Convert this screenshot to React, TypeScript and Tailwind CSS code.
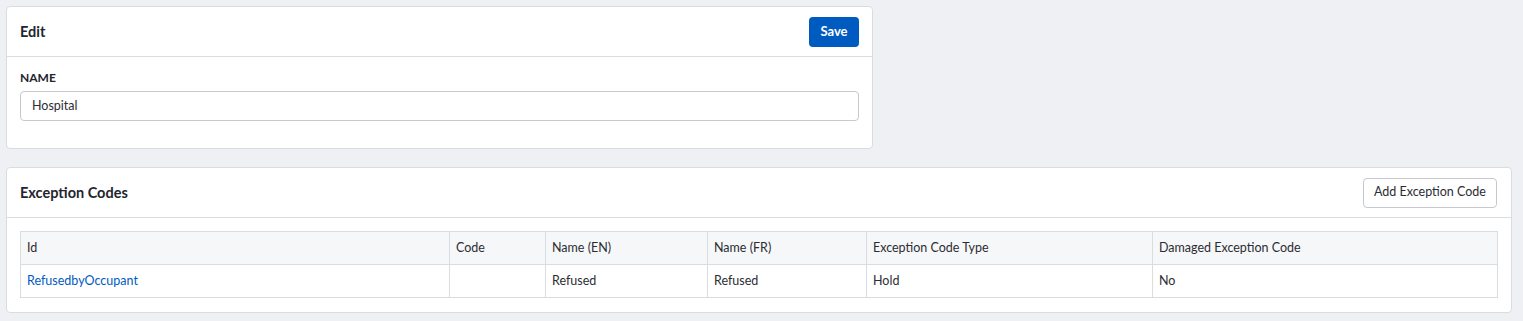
import { Fragment } from "react";

const columns = [
  { label: "Id", width: "w-[429px]" },
  { label: "Code", width: "w-[96px]" },
  { label: "Name (EN)", width: "w-[162px]" },
  { label: "Name (FR)", width: "w-[159px]" },
  { label: "Exception Code Type", width: "w-[286px]" },
  { label: "Damaged Exception Code", width: "" },
];

const rows = [
  {
    id: "RefusedbyOccupant",
    code: "",
    nameEn: "Refused",
    nameFr: "Refused",
    type: "Hold",
    damaged: "No",
  },
];

function CardHeader({ title, children }: { title: string; children?: React.ReactNode }) {
  return (
    <div className="flex h-[50px] items-center justify-between border-b border-[#d9dce1] pl-[13px] pr-[13px]">
      <h2 className="text-[14.5px] font-bold text-[#22252e]">{title}</h2>
      {children}
    </div>
  );
}

export default function App() {
  return (
    <div
      className="min-h-[321px] bg-[#eff0f4] pl-[6px] pt-[6px] text-[#2b2d33]"
      style={{ fontFamily: "Lato, 'Open Sans', sans-serif" }}
    >
      <div className="w-[867px] rounded-[4px] border border-[#d9dce1] bg-white">
        <CardHeader title="Edit">
          <button className="h-[30px] w-[50px] rounded-[4px] bg-[#005bc1] text-[13px] font-bold text-white">
            Save
          </button>
        </CardHeader>
        <div className="px-[13px] pb-[27px] pt-[13px]">
          <label className="block text-[12px] font-bold uppercase leading-[16px] text-[#22252e]">
            Name
          </label>
          <div className="mt-[5px] flex h-[30px] w-[839px] items-center rounded-[4px] border border-[#c7c9ce] px-[11px] text-[12.5px]">
            Hospital
          </div>
        </div>
      </div>

      <div className="mt-[18px] w-[1506px] rounded-[4px] border border-[#d9dce1] bg-white">
        <CardHeader title="Exception Codes">
          <button className="mr-[1px] h-[30px] w-[134px] rounded-[4px] border border-[#c7c9ce] bg-white text-[12.5px] text-[#2b2d33]">
            Add Exception Code
          </button>
        </CardHeader>
        <div className="px-[13px] pb-[14px] pt-[13px]">
          <table className="w-[1478px] table-fixed border-collapse text-[12.5px]">
            <thead>
              <tr className="h-[33px] bg-[#f6f7f9]">
                {columns.map((c) => (
                  <th
                    key={c.label}
                    className={`${c.width} border border-[#d9dce1] px-[6px] text-left font-normal`}
                  >
                    {c.label}
                  </th>
                ))}
              </tr>
            </thead>
            <tbody>
              {rows.map((r) => (
                <Fragment key={r.id}>
                  <tr className="h-[33px]">
                    <td className="border border-[#d9dce1] px-[6px]">
                      <a className="text-[#005bc1]" href="#">
                        {r.id}
                      </a>
                    </td>
                    <td className="border border-[#d9dce1] px-[6px]">{r.code}</td>
                    <td className="border border-[#d9dce1] px-[6px]">{r.nameEn}</td>
                    <td className="border border-[#d9dce1] px-[6px]">{r.nameFr}</td>
                    <td className="border border-[#d9dce1] px-[6px]">{r.type}</td>
                    <td className="border border-[#d9dce1] px-[6px]">{r.damaged}</td>
                  </tr>
                </Fragment>
              ))}
            </tbody>
          </table>
        </div>
      </div>
    </div>
  );
}
